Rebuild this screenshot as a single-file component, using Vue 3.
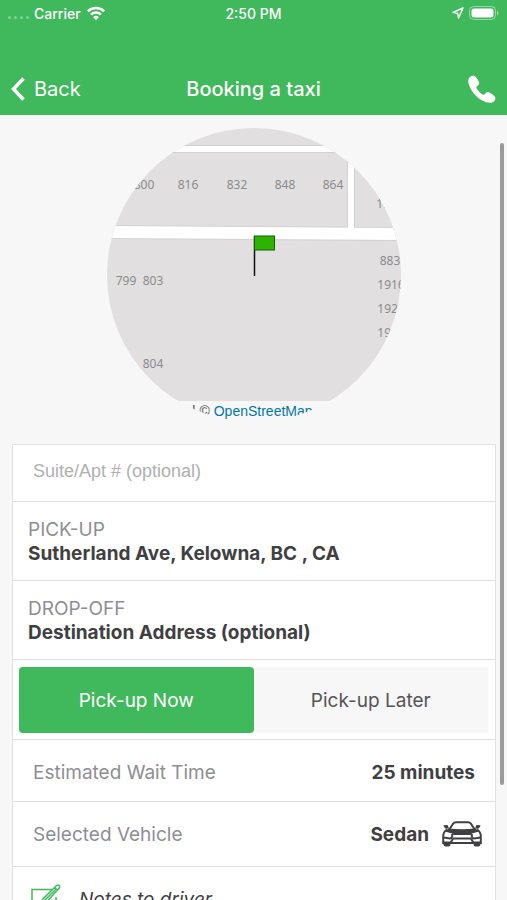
<script setup>
import { ref } from 'vue'

const suite = ref('')
const pickup = ref('now')

const houseNumbers = [
  { x: 37, y: 61, n: '800' },
  { x: 81, y: 61, n: '816' },
  { x: 130, y: 61, n: '832' },
  { x: 178, y: 61, n: '848' },
  { x: 226, y: 61, n: '864' },
  { x: 283, y: 80, n: '1912' },
  { x: 283, y: 137, n: '883' },
  { x: 284, y: 161, n: '1916' },
  { x: 284, y: 185, n: '1920' },
  { x: 284, y: 209, n: '1924' },
  { x: -10, y: 157, n: '795' },
  { x: 19, y: 157, n: '799' },
  { x: 46, y: 157, n: '803' },
  { x: 46, y: 240, n: '804' }
]
</script>

<template>
  <div class="screen">
    <header class="header">
      <div class="status">
        <div class="status-left">
          <span class="signal"><i></i><i></i><i></i><i></i></span>
          <span>Carrier</span>
          <svg class="wifi" viewBox="0 0 20 15" aria-hidden="true">
            <path d="M1.800 5.400a11.600 11.600 0 0 1 16.400 0" />
            <path d="M5 8.600a7.200 7.200 0 0 1 10 0" />
            <path class="solid" d="M10 14.200 7.100 11.200a4.200 4.200 0 0 1 5.800 0z" />
          </svg>
        </div>
        <span>2:50 PM</span>
        <div class="status-right">
          <svg class="location" viewBox="0 0 12 12" aria-hidden="true">
            <path d="M11 1 1 5.400l4.700.9.900 4.700z" />
          </svg>
          <svg class="battery" viewBox="0 0 30 14" aria-hidden="true">
            <rect class="shell" x=".5" y=".5" width="26" height="13" rx="4" />
            <rect class="charge" x="2.500" y="2.500" width="22" height="9" rx="2.500" />
            <path class="tip" d="M28 4.500q1.600 1 1.600 2.500T28 9.500z" />
          </svg>
        </div>
      </div>
      <nav class="nav">
        <button type="button" class="back">
          <svg viewBox="0 0 14 24" aria-hidden="true"><path d="M12.500 1.500 2.500 12l10 10.500" /></svg>
          <span>Back</span>
        </button>
        <h1>Booking a taxi</h1>
        <button type="button" class="call" aria-label="Call">
          <svg viewBox="0 0 28 28" aria-hidden="true">
            <path d="M1.500 2.500C3 .8 5.600.3 7 1.200c1.600 1.200 3.700 4.600 4.200 6.300.4 1.500-.5 2.600-2.300 3.700-.7.500-.7 1.200-.2 2.200 1.500 2.500 3.300 4.400 5.800 6 1 .6 1.700.5 2.200-.2 1.300-1.900 2.500-2.500 4-1.900 1.700.7 4.500 2.700 6 4.100 1.200 1.300.7 3.600-.8 5-1.500 1.300-4.400 1.700-7.600.8C10.500 25 2.500 16.600.5 8.300 0 5.900.3 3.700 1.500 2.500z" />
          </svg>
        </button>
      </nav>
    </header>

    <main class="content">
      <div class="map">
        <svg viewBox="0 0 294 273" role="img" aria-label="Pick-up map">
          <rect width="294" height="273" fill="#e1dfe0" />
          <g class="road-edge">
            <path d="M0 21h294" stroke-width="8" />
            <path d="M244 21v84" stroke-width="8" />
            <path d="M0 104 294 106" stroke-width="14" />
          </g>
          <g class="road">
            <path d="M0 21h294" stroke-width="6" />
            <path d="M244 21v84" stroke-width="6" />
            <path d="M0 104 294 106" stroke-width="12" />
          </g>
          <text v-for="h in houseNumbers" :key="h.n" :x="h.x" :y="h.y">{{ h.n }}</text>
          <path d="M147.500 108v40" stroke="#111" stroke-width="1.500" />
          <rect x="147.500" y="108" width="20" height="14" fill="#2db300" stroke="#195d0a" />
        </svg>
        <p class="attribution">| © <a href="#">OpenStreetMap</a></p>
      </div>

      <form class="card" @submit.prevent>
        <div class="row suite">
          <input v-model="suite" type="text" aria-label="Suite or apartment number" placeholder="Suite/Apt # (optional)" />
        </div>
        <button type="button" class="row address">
          <span>PICK-UP</span>
          <strong>Sutherland Ave, Kelowna, BC , CA</strong>
        </button>
        <button type="button" class="row address">
          <span>DROP-OFF</span>
          <strong>Destination Address (optional)</strong>
        </button>
        <div class="row toggle">
          <button type="button" :class="{ active: pickup === 'now' }" @click="pickup = 'now'">Pick-up Now</button>
          <button type="button" :class="{ active: pickup === 'later' }" @click="pickup = 'later'">Pick-up Later</button>
        </div>
        <div class="row detail">
          <span>Estimated Wait Time</span>
          <strong>25 minutes</strong>
        </div>
        <button type="button" class="row detail vehicle">
          <span>Selected Vehicle</span>
          <strong>Sedan</strong>
          <svg class="car" viewBox="0 0 40 26" aria-hidden="true">
            <path class="line" d="M7 9 11 2.800Q12 1.200 14 1.200h12q2 0 3 1.600L33 9" />
            <path class="dark" d="M1.500 4.200 5.500 4 7 7.500 3.800 7.800Q1.700 6.800 1.500 4.200zM38.500 4.200 34.500 4 33 7.500 36.200 7.800Q38.300 6.800 38.500 4.200z" />
            <path class="dark" d="M6.500 7.500Q20 9 33.500 7.500L37 10.500 30 12.500 28.500 14h-17L10 12.500 3 10.500z" />
            <path class="line" d="M5 8.500Q1.200 11 1.200 15v7h37.600v-7q0-4-3.800-6.500" />
            <path class="line" d="M1.500 16.500 8 17.500Q11 17 10 13M38.500 16.500 32 17.500Q29 17 30 13M11 17.500h18M8.500 22l2.500-4.500M31.500 22 29 17.500" />
            <path class="dark" d="M1.500 20.500H8.500V23q0 2.500-2 2.500H4q-2.500 0-2.500-2.500zM31.500 20.500h7V23q0 2.500-2.500 2.500h-2.500q-2 0-2-2.500z" />
          </svg>
        </button>
        <button type="button" class="row notes">
          <svg viewBox="0 0 30 30" aria-hidden="true">
            <path d="M21 5.500H1v23.500h24V13" />
            <path d="M10 21l2-6L25.500 1.500q1.500-1 2.600 0t.2 2.600L15 18.500zM23.500 3.500l2.700 2.600M13.500 16.500 25.500 4.500" />
          </svg>
          <em>Notes to driver</em>
        </button>
      </form>
      <div class="scroll-thumb"></div>
    </main>
  </div>
</template>

<style>
body {
  margin: 0;
  background: #f7f7f7;
}
</style>

<style scoped>
.screen {
  display: flex;
  flex-direction: column;
  height: 100vh;
  overflow: hidden;
  background: #f7f7f7;
  color: #404042;
  font-family: Inter, "Liberation Sans", sans-serif;
  font-size: 19px;
}
button {
  border: 0;
  background: none;
  padding: 0;
  color: inherit;
  font: inherit;
  text-align: left;
}
.header {
  flex: none;
  background: #3fb95b;
  color: #fff;
}
.status {
  display: grid;
  grid-template-columns: 1fr auto 1fr;
  align-items: center;
  height: 26px;
  padding: 0 8px;
  font-size: 14px;
  font-weight: 500;
}
.status-left,
.status-right {
  display: flex;
  align-items: center;
  gap: 5px;
}
.status-right {
  justify-content: flex-end;
}
.signal {
  display: flex;
  gap: 3px;
  padding-top: 8px;
}
.signal i {
  width: 3px;
  height: 3px;
  border-radius: 50%;
  background: rgba(255, 255, 255, 0.35);
}
.wifi {
  width: 20px;
  height: 15px;
  fill: none;
  stroke: #fff;
  stroke-width: 2.5;
}
.wifi .solid {
  fill: #fff;
  stroke: none;
}
.location {
  width: 12px;
  height: 12px;
  fill: none;
  stroke: #fff;
  stroke-width: 1.4;
  stroke-linejoin: round;
}
.battery {
  width: 30px;
  height: 14px;
}
.shell {
  fill: none;
  stroke: rgba(255, 255, 255, 0.45);
}
.charge {
  fill: #fff;
}
.tip {
  fill: rgba(255, 255, 255, 0.45);
}
.nav {
  display: grid;
  grid-template-columns: 1fr auto 1fr;
  align-items: center;
  padding: 37px 11px 0;
  height: 52px;
  font-size: 20px;
}
.nav h1 {
  margin: 0;
  font-size: 20px;
  font-weight: 500;
}
.back {
  display: flex;
  align-items: center;
  gap: 9px;
}
.back svg {
  width: 14px;
  height: 24px;
  fill: none;
  stroke: #fff;
  stroke-width: 3.5;
}
.call {
  justify-self: end;
}
.call svg {
  display: block;
  width: 28px;
  height: 28px;
  fill: #fff;
}
.content {
  position: relative;
  flex: 1;
  min-height: 0;
  overflow: hidden;
  padding: 13px 11px 0 12px;
}
.map {
  width: 294px;
  height: 294px;
  margin: 0 auto 22px;
  border-radius: 50%;
  overflow: hidden;
}
.map svg {
  display: block;
  width: 100%;
}
.map text {
  fill: #8c8b8c;
  font-family: "Noto Sans", sans-serif;
  font-size: 12px;
  text-anchor: middle;
}
.road-edge {
  fill: none;
  stroke: #d3d1d2;
}
.road {
  fill: none;
  stroke: #fff;
}
.attribution {
  margin: 0;
  padding-left: 85px;
  white-space: nowrap;
  color: #444;
  font-family: "Liberation Sans", sans-serif;
  font-size: 14px;
  line-height: 20px;
}
.attribution a {
  color: #0078a8;
  text-decoration: none;
}
.card {
  border: 1px solid #e2e2e2;
  background: #fff;
}
.row {
  box-sizing: border-box;
  display: flex;
  width: 100%;
  border-bottom: 1px solid #dfdfdf;
}
.suite {
  height: 57px;
  padding-bottom: 3px;
}
.suite input {
  width: 100%;
  box-sizing: border-box;
  padding: 0 20px;
  border: 0;
  outline: 0;
  background: none;
  color: #404042;
  font-family: "Liberation Sans", sans-serif;
  font-size: 18px;
}
.suite input::placeholder {
  color: #b0b0b0;
  opacity: 1;
}
.address {
  flex-direction: column;
  justify-content: center;
  height: 79px;
  padding: 2px 15px 0;
  line-height: 24px;
}
.address span,
.detail span {
  color: #8e8e93;
}
strong {
  font-weight: 700;
}
.toggle {
  height: 80px;
  padding: 7px 7px 6px 6px;
}
.toggle button {
  flex: 1;
  background: #f7f7f7;
  color: #555;
  text-align: center;
}
.toggle .active {
  border-radius: 4px;
  background: #3fb95b;
  color: #fff;
}
.detail {
  align-items: center;
  justify-content: space-between;
  height: 62px;
  padding: 4px 20px 0;
}
.vehicle {
  height: 65px;
  padding: 0 13px 0 20px;
}
.vehicle strong {
  margin-left: auto;
}
.car {
  width: 40px;
  height: 26px;
  margin-left: 13px;
}
.car .line {
  fill: none;
  stroke: #404042;
  stroke-width: 2;
}
.car .dark {
  fill: #404042;
}
.notes {
  align-items: center;
  height: 65px;
  padding: 0 18px;
}
.notes svg {
  width: 30px;
  height: 30px;
  margin-right: 18px;
  fill: none;
  stroke: #3fb95b;
  stroke-width: 1.5;
}
.scroll-thumb {
  position: absolute;
  top: 28px;
  right: 3px;
  bottom: 115px;
  width: 4px;
  border-radius: 2px;
  background: #9b9b9b;
}
</style>
